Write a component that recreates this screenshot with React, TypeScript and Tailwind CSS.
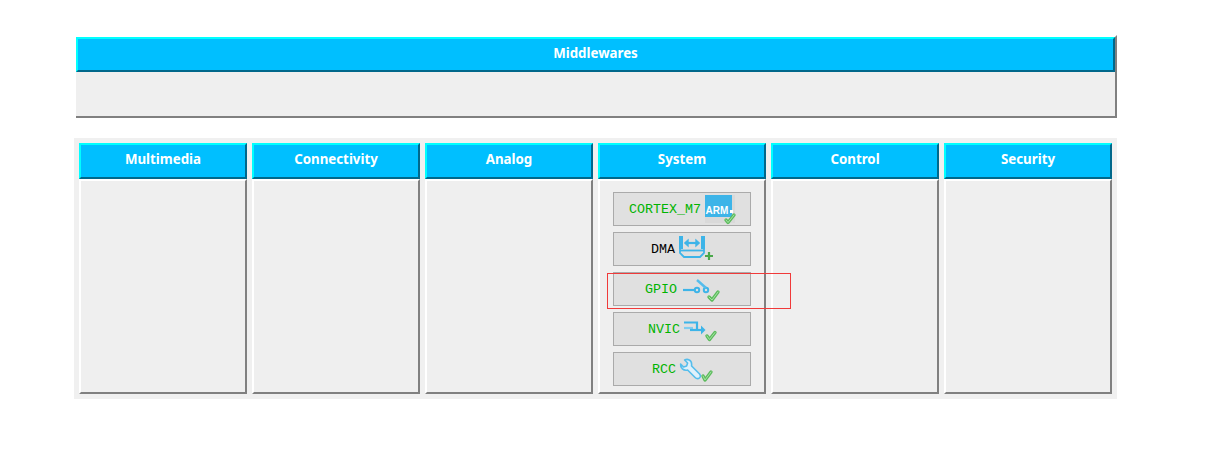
import React from "react";

const mono = "font-['Liberation_Mono',monospace] text-[13.33px] leading-none pt-[1px]";

function Check({ d }: { d: string }) {
  return (
    <g fill="none" strokeLinecap="round" strokeLinejoin="round">
      <path d={d} stroke="#5dbb5d" strokeWidth="3.4" />
      <path d={d} stroke="#a4e4a4" strokeWidth="1" />
    </g>
  );
}

function ArmIcon() {
  return (
    <svg width="30" height="28" viewBox="0 0 30 28" className="shrink-0 overflow-visible">
      <rect x="0" y="0" width="30" height="28" fill="#d9d9d9" />
      <rect x="0" y="0" width="27" height="22" fill="#3db4e8" />
      <text x="0.5" y="19" fontFamily="Liberation Sans" fontWeight="700" fontSize="10" fill="#fff">ARM</text>
      <rect x="25" y="15" width="3" height="3" fill="#fff" />
      <Check d="M21 25 L23 27.5 L29 20" />
    </svg>
  );
}

function DmaIcon() {
  return (
    <svg width="34" height="26" viewBox="0 0 34 26" className="shrink-0 overflow-visible">
      <g stroke="#3db4e8" fill="none">
        <path d="M2 0 V13 M24 0 V13" strokeWidth="4" />
        <path d="M8 7 H18" strokeWidth="2.2" />
        <path d="M9.5 3 L5 7 L9.5 11 Z M16.5 3 L21 7 L16.5 11 Z" fill="#3db4e8" strokeWidth="0.4" />
        <path d="M1 14.5 H25" strokeWidth="1.8" />
        <path d="M1 13 V17 L5 21 H21 L25 17 V13" strokeWidth="1.8" />
      </g>
      <path d="M26 20 H34 M30 16 V24" stroke="#4aa84a" strokeWidth="2.2" />
    </svg>
  );
}

function GpioIcon() {
  return (
    <svg width="38" height="28" viewBox="0 0 38 28" className="shrink-0 overflow-visible">
      <g stroke="#3db4e8" fill="none">
        <path d="M2 15 H14" strokeWidth="2.2" />
        <circle cx="16" cy="15" r="2.2" strokeWidth="2" />
        <circle cx="25" cy="15" r="2.2" strokeWidth="2" />
        <path d="M16 5 L25 13" strokeWidth="2.4" stroke="#55bdec" />
      </g>
      <Check d="M28 22 L31 25 L37 17" />
    </svg>
  );
}

function NvicIcon() {
  return (
    <svg width="32" height="28" viewBox="0 0 32 28" className="shrink-0 overflow-visible">
      <g fill="none">
        <path d="M0 13 H9" stroke="#7fcdf0" strokeWidth="2.2" />
        <path d="M0 7.5 H13 V15" stroke="#3db4e8" strokeWidth="2.2" />
        <path d="M6 15 H18" stroke="#3db4e8" strokeWidth="2.2" />
      </g>
      <path d="M17 10.5 L21.5 15 L17 19.5 Z" fill="#3db4e8" />
      <Check d="M23 21 L25.5 24.5 L31 17.5" />
    </svg>
  );
}

function RccIcon() {
  return (
    <svg width="32" height="28" viewBox="0 0 32 28" className="shrink-0 overflow-visible">
      <path
        d="M0.6 9 L3.6 12 L6.6 11 L7.6 8 L4.6 5 C7.6 3.5 11.6 5 11.6 9 L11.6 11 L19.6 19 Q21.6 22 18.6 23.5 Q16.6 24 15.1 22.5 L7.6 15 C3.6 16 0.1 13 0.6 9 Z"
        fill="#dff1fb"
        stroke="#55bdec"
        strokeWidth="1.6"
        strokeLinejoin="round"
      />
      <Check d="M23 21 L25 25 L31 17" />
    </svg>
  );
}

function Module({ name, color, icon }: { name: string; color: string; icon: React.ReactNode }) {
  return (
    <div className="flex h-[34px] w-[138px] items-center justify-center gap-[4px] border border-[#aaaaaa] bg-[#e0e0e0]">
      <span className={`${mono} ${color}`}>{name}</span>
      {icon}
    </div>
  );
}

function Header({ title, h }: { title: string; h: string }) {
  return (
    <div
      className={`flex ${h} items-center justify-center border-2 border-b-[#00688b] border-l-[#00ffff] border-r-[#00688b] border-t-[#00ffff] bg-[#00bfff] font-['Noto_Sans',sans-serif] text-[13.3px] font-bold text-white`}
    >
      {title}
    </div>
  );
}

function Column({ title, children }: { title: string; children?: React.ReactNode }) {
  return (
    <div className="flex w-[168px] flex-col">
      <Header title={title} h="h-[36px] pb-[3px]" />
      <div className="flex h-[215px] flex-col items-center gap-[6px] border-2 border-b-[#808080] border-l-white border-r-[#808080] border-t-white bg-[#efefef] pt-[11px]">
        {children}
      </div>
    </div>
  );
}

export default function App() {
  return (
    <div className="relative h-[456px] w-[1213px] bg-white pl-[74px] pt-[35px]">
      <div className="ml-[2px] w-[1041px] border-r-2 border-t-2 border-r-[#808080] border-t-white">
        <Header title="Middlewares" h="h-[35px] pb-[1px]" />
        <div className="h-[46px] border-b-2 border-b-[#808080] bg-[#efefef]" />
      </div>

      <div className="mt-[20px] flex h-[261px] w-[1043px] gap-[5px] bg-[#f0f0f0] pl-[5px] pt-[5px]">
        <Column title="Multimedia" />
        <Column title="Connectivity" />
        <Column title="Analog" />
        <Column title="System">
          <Module name="CORTEX_M7" color="text-[#00b400]" icon={<ArmIcon />} />
          <Module name="DMA" color="text-black" icon={<DmaIcon />} />
          <Module name="GPIO" color="text-[#00b400]" icon={<GpioIcon />} />
          <Module name="NVIC" color="text-[#00b400]" icon={<NvicIcon />} />
          <Module name="RCC" color="text-[#00b400]" icon={<RccIcon />} />
        </Column>
        <Column title="Control" />
        <Column title="Security" />
      </div>

      <div className="absolute left-[607px] top-[273px] h-[36px] w-[184px] border border-[#f03a3a]" />
    </div>
  );
}
